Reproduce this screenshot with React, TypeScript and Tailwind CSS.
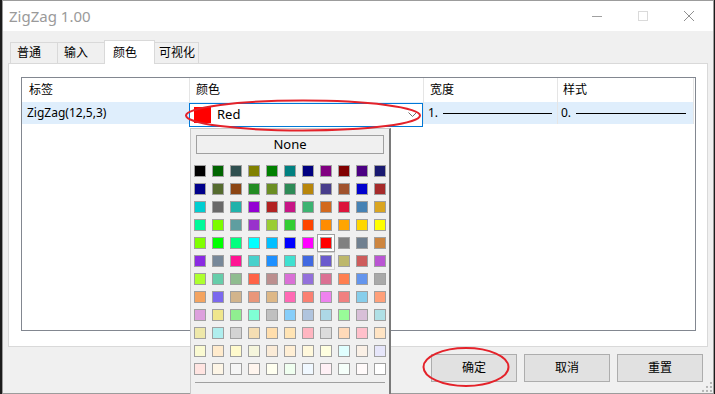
import React from "react";

const PALETTE = [
    "bg-[#000000]", "bg-[#006400]", "bg-[#2f4f4f]", "bg-[#808000]", "bg-[#008000]", "bg-[#008080]", "bg-[#000080]", "bg-[#800080]", "bg-[#800000]", "bg-[#4b0082]", "bg-[#191970]",
    "bg-[#00008b]", "bg-[#556b2f]", "bg-[#8b4513]", "bg-[#228b22]", "bg-[#6b8e23]", "bg-[#2e8b57]", "bg-[#b8860b]", "bg-[#483d8b]", "bg-[#a0522d]", "bg-[#0000cd]", "bg-[#a52a2a]",
    "bg-[#00ced1]", "bg-[#696969]", "bg-[#20b2aa]", "bg-[#9400d3]", "bg-[#b22222]", "bg-[#c71585]", "bg-[#3cb371]", "bg-[#d2691e]", "bg-[#dc143c]", "bg-[#4682b4]", "bg-[#daa520]",
    "bg-[#00fa9a]", "bg-[#7cfc00]", "bg-[#5f9ea0]", "bg-[#9932cc]", "bg-[#9acd32]", "bg-[#32cd32]", "bg-[#ff4500]", "bg-[#ff8c00]", "bg-[#ffa500]", "bg-[#ffd700]", "bg-[#ffff00]",
    "bg-[#7fff00]", "bg-[#00ff00]", "bg-[#00ff7f]", "bg-[#00ffff]", "bg-[#00bfff]", "bg-[#0000ff]", "bg-[#ff00ff]", "bg-[#ff0000]", "bg-[#808080]", "bg-[#708090]", "bg-[#cd853f]",
    "bg-[#8a2be2]", "bg-[#778899]", "bg-[#ff1493]", "bg-[#48d1cc]", "bg-[#1e90ff]", "bg-[#40e0d0]", "bg-[#4169e1]", "bg-[#6a5acd]", "bg-[#bdb76b]", "bg-[#cd5c5c]", "bg-[#ba55d3]",
    "bg-[#adff2f]", "bg-[#66cdaa]", "bg-[#8fbc8f]", "bg-[#ff6347]", "bg-[#bc8f8f]", "bg-[#da70d6]", "bg-[#9370db]", "bg-[#db7093]", "bg-[#ff7f50]", "bg-[#6495ed]", "bg-[#a9a9a9]",
    "bg-[#f4a460]", "bg-[#7b68ee]", "bg-[#d2b48c]", "bg-[#e9967a]", "bg-[#deb887]", "bg-[#ff69b4]", "bg-[#fa8072]", "bg-[#ee82ee]", "bg-[#f08080]", "bg-[#87ceeb]", "bg-[#ffa07a]",
    "bg-[#dda0dd]", "bg-[#f0e68c]", "bg-[#90ee90]", "bg-[#7fffd4]", "bg-[#c0c0c0]", "bg-[#87cefa]", "bg-[#b0c4de]", "bg-[#add8e6]", "bg-[#98fb98]", "bg-[#d8bfd8]", "bg-[#b0e0e6]",
    "bg-[#eee8aa]", "bg-[#afeeee]", "bg-[#d3d3d3]", "bg-[#f5deb3]", "bg-[#ffdead]", "bg-[#ffe4b5]", "bg-[#ffb6c1]", "bg-[#dcdcdc]", "bg-[#ffdab9]", "bg-[#ffc0cb]", "bg-[#ffe4c4]",
    "bg-[#fafad2]", "bg-[#ffebcd]", "bg-[#fffacd]", "bg-[#f5f5dc]", "bg-[#faebd7]", "bg-[#ffefd5]", "bg-[#fff8dc]", "bg-[#ffffe0]", "bg-[#e0ffff]", "bg-[#faf0e6]", "bg-[#e6e6fa]",
    "bg-[#ffe4e1]", "bg-[#fdf5e6]", "bg-[#f5f5f5]", "bg-[#fff5ee]", "bg-[#fffff0]", "bg-[#f0fff0]", "bg-[#f0f8ff]", "bg-[#fff0f5]", "bg-[#f5fffa]", "bg-[#fffafa]", "bg-[#ffffff]",
];

const SELECTED = 51; // red
const HOVER = 62; // slate blue

function TitleBar() {
    return (
        <div className="flex h-[30px] items-center bg-white">
            <span className="pl-[6px] text-[15px] text-[#9a9a9a]">ZigZag 1.00</span>
            <div className="ml-auto flex items-center">
                <svg width="46" height="30" viewBox="0 0 46 30">
                    <line x1="18" y1="15.5" x2="28" y2="15.5" stroke="#a0a0a0" strokeWidth="1"/>
                </svg>
                <svg width="46" height="30" viewBox="0 0 46 30">
                    <rect x="18.5" y="10.5" width="9" height="9" fill="none" stroke="#dadada" strokeWidth="1"/>
                </svg>
                <svg width="46" height="30" viewBox="0 0 46 30" className="mr-[1px]">
                    <path d="M18 10 L28 20 M28 10 L18 20" stroke="#909090" strokeWidth="1"/>
                </svg>
            </div>
        </div>
    );
}

function Tabs() {
    const tabs = [
        {label: "普通", w: "w-[48px]", pl: "pl-[6px]"},
        {label: "输入", w: "w-[48px]", pl: "pl-[6px]"},
        {label: "颜色", w: "w-[51px]", pl: "pl-[8px]", active: true},
        {label: "可视化", w: "w-[45px]", pl: "pl-[4px]"},
    ];
    return (
        <div className="mt-[9px] flex h-[23px] items-end pl-[7px]">
            {tabs.map((t, i) => (
                <div
                    key={t.label}
                    className={
                        t.active
                            ? `relative z-10 -mb-[1px] -ml-[1px] flex h-[24px] items-start border border-b-0 border-[#d9d9d9] bg-white pt-[3px] ${t.w} ${t.pl}`
                            : `flex h-[21px] items-center border border-b-0 border-[#d9d9d9] bg-[#f0f0f0] ${i > 0 ? "-ml-[1px]" : ""} ${t.w} ${t.pl}`
                    }
                >
                    {t.label}
                </div>
            ))}
        </div>
    );
}

function ListView() {
    return (
        <div className="ml-[12px] mt-[13px] h-[254px] w-[675px] border border-[#828790] bg-white">
            <div className="flex h-[24px]">
                <div className="flex w-[168px] items-center border-r border-[#e5e5e5] pl-[7px]">标签</div>
                <div className="flex w-[234px] items-center border-r border-[#e5e5e5] pl-[6px]">颜色</div>
                <div className="flex w-[134px] items-center border-r border-[#e5e5e5] pl-[6px]">宽度</div>
                <div className="flex w-[136px] items-center border-r border-[#e5e5e5] pl-[5px]">样式</div>
            </div>
            <div className="flex h-[22px] w-[672px] bg-[#dfeefc]">
                <div className="flex w-[168px] items-center border-r border-[#e5e5e5] pl-[5px]">ZigZag(12,5,3)</div>
                <div className="relative w-[234px] border-r border-[#e5e5e5]">
                    <div className="absolute left-[-1px] top-[1px] z-10 flex h-[24px] w-[234px] items-center border border-[#0078d7] bg-white">
                        <div className="ml-[4px] h-[16px] w-[17px] bg-[#ff0000]"/>
                        <span className="ml-[6px] text-[13px]">Red</span>
                        <svg width="9" height="6" viewBox="0 0 9 6" className="ml-auto mr-[5px]">
                            <path d="M0.5 0.5 L4.5 4.5 L8.5 0.5" fill="none" stroke="#707070" strokeWidth="1"/>
                        </svg>
                    </div>
                </div>
                <div className="flex w-[134px] items-center border-r border-[#e5e5e5] pl-[4px]">
                    <span>1.</span>
                    <div className="ml-[5px] h-px w-[109px] bg-black"/>
                </div>
                <div className="flex w-[136px] items-center border-r border-[#e5e5e5] pl-[3px]">
                    <span>0.</span>
                    <div className="ml-[5px] h-px w-[110px] bg-black"/>
                </div>
            </div>
        </div>
    );
}

function ColorDropdown() {
    return (
        <div className="absolute left-[190px] top-[128px] z-20 flex h-[270px] w-[201px] flex-col border-l border-t border-[#c9c9c9] border-r-2 border-r-[#7a7a7a] bg-[#f0f0f0]">
            <div className="ml-[5px] mt-[6px] flex h-[19px] w-[188px] items-center justify-center border border-[#a0a0a0] text-[13px]">
                None
            </div>
            <div className="ml-[3px] mt-[11px] grid w-[192px] grid-cols-[repeat(11,12px)] gap-[6px]">
                {PALETTE.map((c, i) => (
                    <div key={i} className="relative h-[12px] w-[12px]">
                        {i === SELECTED && (
                            <div className="absolute -inset-[3px] border border-[#a0a0a0] bg-white"/>
                        )}
                        {i === HOVER && (
                            <div className="absolute -inset-[3px] border border-[#d2d2d2] bg-[#f7f7f7]"/>
                        )}
                        <div className={`relative h-[12px] w-[12px] border border-[#a0a0a0] ${c}`}/>
                    </div>
                ))}
            </div>
            <div className="ml-[4px] mt-[7px] h-px w-[190px] bg-[#a0a0a0]"/>
        </div>
    );
}

function Buttons() {
    return (
        <div className="mt-[7px] flex justify-end gap-[7px] pr-[10px]">
            {["确定", "取消", "重置"].map((b) => (
                <div key={b} className="flex h-[28px] w-[86px] items-center justify-center border border-[#adadad] bg-[#e1e1e1]">
                    {b}
                </div>
            ))}
        </div>
    );
}

export default function App() {
    return (
        <div className="relative h-[394px] w-[715px] overflow-hidden bg-[#1c1c1c] font-['Noto_Sans','Noto_Sans_CJK_SC',sans-serif] text-[12px] text-black">
            <div className="ml-[2px] flex h-[394px] w-[712px] flex-col border border-[#9c9c9c] bg-[#f0f0f0]">
                <TitleBar/>
                <Tabs/>
                <div className="ml-[5px] h-[286px] w-[700px] border border-[#d9d9d9] bg-white">
                    <ListView/>
                </div>
                <Buttons/>
                <svg width="10" height="10" viewBox="0 0 10 10" className="ml-auto mr-[1px] mt-auto mb-[1px]">
                    <rect x="8" y="0" width="2" height="2" fill="#b5b5b5"/>
                    <rect x="4" y="4" width="2" height="2" fill="#b5b5b5"/>
                    <rect x="8" y="4" width="2" height="2" fill="#b5b5b5"/>
                    <rect x="0" y="8" width="2" height="2" fill="#b5b5b5"/>
                    <rect x="4" y="8" width="2" height="2" fill="#b5b5b5"/>
                    <rect x="8" y="8" width="2" height="2" fill="#b5b5b5"/>
                </svg>
            </div>
            <ColorDropdown/>
            <svg className="pointer-events-none absolute inset-0 z-30" width="715" height="394" viewBox="0 0 715 394">
                <ellipse cx="303" cy="115.5" rx="117" ry="15" fill="none" stroke="#e4222a" strokeWidth="2"/>
                <ellipse cx="466" cy="367" rx="42.5" ry="19" fill="none" stroke="#e4222a" strokeWidth="2"/>
            </svg>
        </div>
    );
}
